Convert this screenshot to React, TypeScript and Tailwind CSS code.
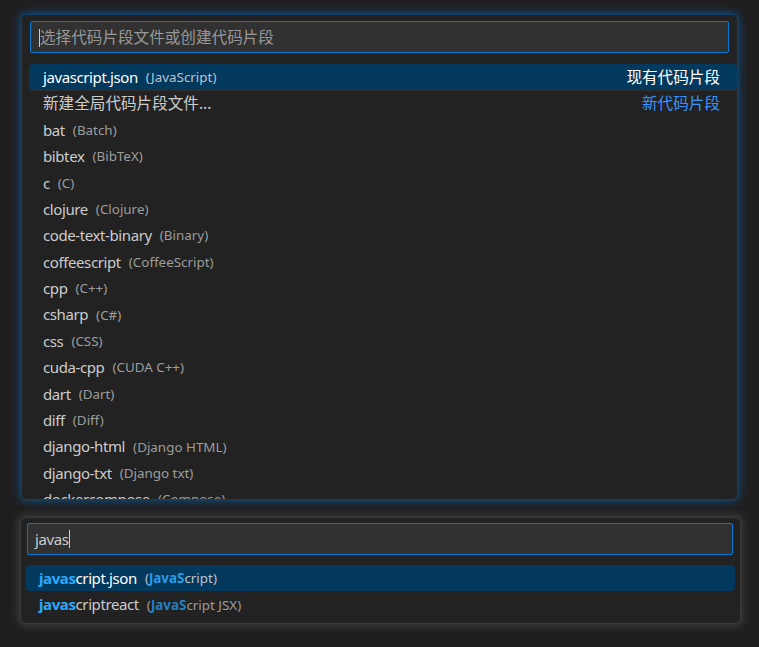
import React from "react";

const font = { fontFamily: '"Noto Sans", "Noto Sans CJK SC", sans-serif' };

const items: [string, string][] = [
  ["bat", "Batch"],
  ["bibtex", "BibTeX"],
  ["c", "C"],
  ["clojure", "Clojure"],
  ["code-text-binary", "Binary"],
  ["coffeescript", "CoffeeScript"],
  ["cpp", "C++"],
  ["csharp", "C#"],
  ["css", "CSS"],
  ["cuda-cpp", "CUDA C++"],
  ["dart", "Dart"],
  ["diff", "Diff"],
  ["django-html", "Django HTML"],
  ["django-txt", "Django txt"],
  ["dockercompose", "Compose"],
];

function Row({ label, desc }: { label: string; desc: string }) {
  return (
    <div className="flex h-[26.4px] shrink-0 items-center pl-[14px]">
      <span className="text-[15px] tracking-[-0.4px] text-[#cccccc]">{label}</span>
      <span className="ml-[8px] text-[13.4px] text-[#9d9d9d]">({desc})</span>
    </div>
  );
}

export default function App() {
  return (
    <div
      className="flex h-[647px] w-full flex-col overflow-hidden bg-[#1f1f1f] pt-[14px]"
      style={font}
    >
      {/* top quick pick */}
      <div className="ml-[21px] flex h-[486px] w-[717px] flex-col overflow-hidden rounded-[5px] border border-[#12406a] bg-[#222222] shadow-[0_0_8px_1px_rgba(0,120,212,0.55)]">
        <div className="px-[8px] pt-[6px]">
          <div className="flex h-[32px] items-center rounded-[2px] border border-[#0078d4] bg-[#313131] pl-[8px] pt-[2px]">
            <span className="h-[18px] w-px bg-[#cccccc]" />
            <span className="text-[15.6px] text-[#989898]">选择代码片段文件或创建代码片段</span>
          </div>
        </div>
        <div className="mt-[11px] flex flex-col pl-[7px]">
          <div className="flex h-[26.4px] shrink-0 items-center rounded-[4px] bg-[#04395e] pl-[14px] pr-[17px]">
            <span className="text-[15px] tracking-[-0.4px] text-[#ffffff]">javascript.json</span>
            <span className="ml-[8px] text-[13.4px] text-[#b9c4cf]">(JavaScript)</span>
            <span className="ml-auto text-[15.6px] text-[#ffffff]">现有代码片段</span>
          </div>
          <div className="flex h-[26.4px] shrink-0 items-center border-t border-[#2e2e2e] pl-[14px] pr-[17px]">
            <span className="text-[15.6px] text-[#cccccc]">新建全局代码片段文件...</span>
            <span className="ml-auto text-[15.6px] text-[#3794ff]">新代码片段</span>
          </div>
          {items.map(([l, d]) => (
            <Row key={l} label={l} desc={d} />
          ))}
        </div>
      </div>

      {/* bottom quick pick */}
      <div className="ml-[20px] mt-[17px] flex h-[107px] w-[721px] flex-col rounded-[6px] border border-[#3a3a3a] bg-[#222222] shadow-[0_0_8px_2px_rgba(90,90,90,0.55)]">
        <div className="px-[6px] pt-[5px] pr-[7px]">
          <div className="flex h-[32px] items-center rounded-[2px] border border-[#0078d4] bg-[#313131] pl-[7px]">
            <span className="text-[15px] tracking-[-0.4px] text-[#cccccc]">javas</span>
            <span className="h-[18px] w-px bg-[#cccccc]" />
          </div>
        </div>
        <div className="mt-[10px] flex flex-col px-[5px]">
          <div className="flex h-[26.4px] items-center rounded-[4px] bg-[#04395e] pl-[13px]">
            <span className="text-[15px] tracking-[-0.4px] text-[#ffffff]">
              <b className="font-bold text-[#2aaaff]">javas</b>cript.json
            </span>
            <span className="ml-[8px] text-[13.4px] text-[#b9c4cf]">
              (<b className="font-bold text-[#2a9be8]">JavaS</b>cript)
            </span>
          </div>
          <div className="flex h-[26.4px] items-center pl-[13px]">
            <span className="text-[15px] tracking-[-0.4px] text-[#cccccc]">
              <b className="font-bold text-[#2aaaff]">javas</b>criptreact
            </span>
            <span className="ml-[8px] text-[13.4px] text-[#9d9d9d]">
              (<b className="font-bold text-[#2080c8]">JavaS</b>cript JSX)
            </span>
          </div>
        </div>
      </div>
    </div>
  );
}
